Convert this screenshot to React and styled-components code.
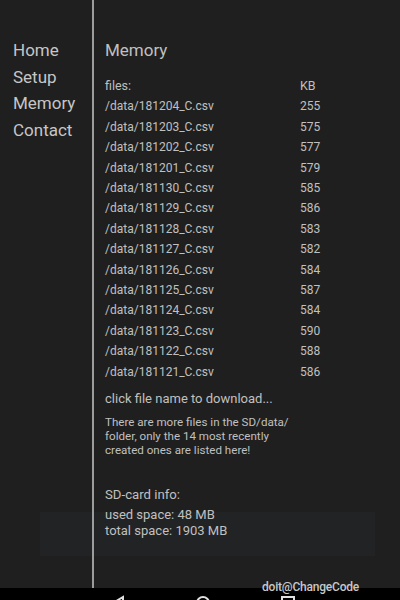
import styled, { createGlobalStyle } from 'styled-components';

const GlobalStyle = createGlobalStyle`
  html, body {
    margin: 0;
    padding: 0;
    background: #1f1f1f;
  }
  body {
    font-family: Roboto, 'Noto Sans', sans-serif;
  }
`;

const Screen = styled.div`
  position: relative;
  width: 400px;
  height: 600px;
  display: flex;
  flex-direction: column;
  background: #1f1f1f;
  overflow: hidden;
`;

const Main = styled.div`
  position: relative;
  z-index: 1;
  height: 588px;
  display: flex;
`;

const Drawer = styled.nav`
  width: 92px;
  padding: 37px 0 0 13px;
  box-sizing: border-box;
  display: flex;
  flex-direction: column;
`;

const MenuItem = styled.div`
  font-size: 17px;
  line-height: 26.7px;
  color: #c6c6c6;
`;

const Divider = styled.div`
  width: 2px;
  background: #9c9c9c;
`;

const Content = styled.section`
  flex: 1;
  padding: 37px 0 0 11px;
  display: flex;
  flex-direction: column;
  color: #c0c0c0;
`;

const Title = styled.div`
  font-size: 17px;
  line-height: 26px;
  margin-bottom: 13px;
`;

const FileTable = styled.div`
  display: grid;
  grid-template-columns: 195px auto;
  font-size: 12px;
  line-height: 20.4px;
`;

const Cell = styled.div`
  white-space: nowrap;
  font-size: ${p => (p.$head ? '12.5px' : '12px')};
`;

const Hint = styled.div`
  font-size: 13px;
  line-height: 16px;
  margin-top: 9px;
`;

const Note = styled.p`
  margin: 8px 0 0;
  white-space: nowrap;
  font-size: 11.6px;
  line-height: 14px;
`;

const InfoTitle = styled.div`
  font-size: 13.2px;
  line-height: 18px;
  margin-top: 29px;
`;

const InfoBlock = styled.div`
  margin-top: 3px;
  font-size: 13px;
  line-height: 16px;
`;

const NavBar = styled.div`
  height: 12px;
  background: #000;
  display: flex;
  justify-content: space-between;
  padding: 0 104px 0 110px;
  overflow: hidden;
`;

const NavIcon = styled.svg`
  margin-top: 7px;
  width: 16px;
  height: 16px;
`;

const Watermark = styled.div`
  position: absolute;
  z-index: 2;
  left: 262px;
  top: 580px;
  font-size: 12px;
  font-weight: 500;
  color: #c8c8c8;
  letter-spacing: -0.2px;
`;

const ChartShade = styled.div`
  position: absolute;
  z-index: 0;
  left: 40px;
  top: 512px;
  width: 335px;
  height: 44px;
  background: #212325;
`;

const files = [
  ['181204', 255],
  ['181203', 575],
  ['181202', 577],
  ['181201', 579],
  ['181130', 585],
  ['181129', 586],
  ['181128', 583],
  ['181127', 582],
  ['181126', 584],
  ['181125', 587],
  ['181124', 584],
  ['181123', 590],
  ['181122', 588],
  ['181121', 586],
];

function App() {
  return (
    <Screen>
      <GlobalStyle />
      <ChartShade />
      <Main>
        <Drawer>
          <MenuItem>Home</MenuItem>
          <MenuItem>Setup</MenuItem>
          <MenuItem>Memory</MenuItem>
          <MenuItem>Contact</MenuItem>
        </Drawer>
        <Divider />
        <Content>
          <Title>Memory</Title>
          <FileTable>
            <Cell $head>files:</Cell>
            <Cell $head>KB</Cell>
            {files.flatMap(([name, kb]) => [
              <Cell key={name}>/data/{name}_C.csv</Cell>,
              <Cell key={name + 'kb'}>{kb}</Cell>,
            ])}
          </FileTable>
          <Hint>click file name to download...</Hint>
          <Note>
            There are more files in the SD/data/
            <br />
            folder, only the 14 most recently
            <br />
            created ones are listed here!
          </Note>
          <InfoTitle>SD-card info:</InfoTitle>
          <InfoBlock>
            used space: 48 MB
            <br />
            total space: 1903 MB
          </InfoBlock>
        </Content>
      </Main>
      <NavBar>
        <NavIcon viewBox="0 0 16 16">
          <path d="M3 8 L13 2 L13 14 Z" fill="none" stroke="#e0e0e0" strokeWidth="2" />
        </NavIcon>
        <NavIcon viewBox="0 0 16 16">
          <circle cx="8" cy="8" r="6" fill="none" stroke="#e0e0e0" strokeWidth="2" />
        </NavIcon>
        <NavIcon viewBox="0 0 16 16">
          <rect x="2" y="2" width="12" height="12" fill="none" stroke="#e0e0e0" strokeWidth="2" />
        </NavIcon>
      </NavBar>
      <Watermark>doit@ChangeCode</Watermark>
    </Screen>
  );
}

export default App;
